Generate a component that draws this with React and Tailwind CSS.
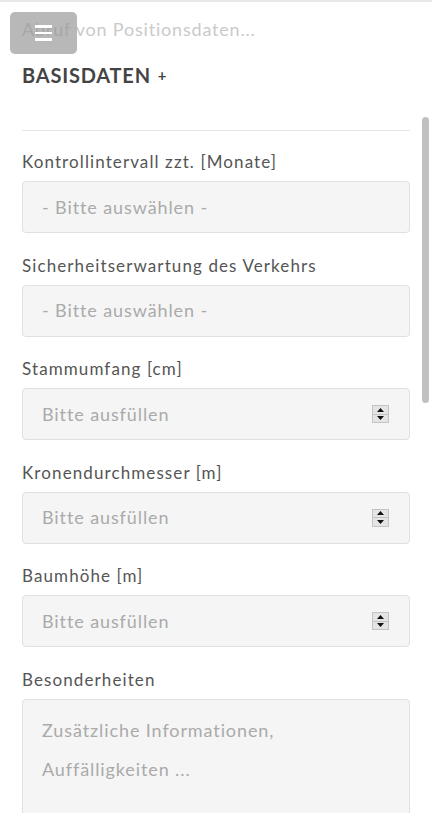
import React from "react";

function Label({ children }) {
  return (
    <div className="text-[17px] leading-[24px] text-[#555555] tracking-[1.1px]">{children}</div>
  );
}

function Spinner() {
  return (
    <div className="flex h-[18px] w-[17px] flex-col border border-[#c4c4c4] bg-[#e4e4e4]">
      <div className="flex flex-1 items-center justify-center border-b border-[#c4c4c4]">
        <svg width="7" height="4" viewBox="0 0 7 4"><path d="M0 4 L3.5 0 L7 4 Z" fill="#111" /></svg>
      </div>
      <div className="flex flex-1 items-center justify-center">
        <svg width="7" height="4" viewBox="0 0 7 4"><path d="M0 0 L3.5 4 L7 0 Z" fill="#111" /></svg>
      </div>
    </div>
  );
}

function Box({ children, spinner }) {
  return (
    <div className="mt-[7px] flex h-[52px] items-center justify-between rounded-[4px] border border-[#e0e0e0] bg-[#f5f5f5] pl-[19px] pr-[20px] text-[18px] tracking-[0.9px] text-[#aaaaaa]">
      <span>{children}</span>
      {spinner && <Spinner />}
    </div>
  );
}

function Field({ label, value, spinner, first }) {
  return (
    <div className={first ? "mt-[19px]" : "mt-[20.5px]"}>
      <Label>{label}</Label>
      <Box spinner={spinner}>{value}</Box>
    </div>
  );
}

export default function App() {
  return (
    <div
      className="relative h-[813px] w-[432px] overflow-hidden border-t-2 border-[#e8e8e8] bg-white"
      style={{ fontFamily: "Lato, 'Open Sans', sans-serif" }}
    >
      <div className="px-[22px]">
        <p className="pt-[16px] text-[18px] leading-[22px] tracking-[0.8px] text-[#cacaca]">Abruf von Positionsdaten...</p>
        <h2 className="mt-[23px] flex items-center gap-[7px] text-[20px] font-bold leading-[24px] tracking-[0.8px] text-[#444444]">
          BASISDATEN <span className="text-[15px] font-bold">+</span>
        </h2>
        <div className="mt-[43px] h-px bg-[#e4e4e4]" />
        <Field first label="Kontrollintervall zzt. [Monate]" value="- Bitte auswählen -" />
        <Field label="Sicherheitserwartung des Verkehrs" value="- Bitte auswählen -" />
        <Field label="Stammumfang [cm]" value="Bitte ausfüllen" spinner />
        <Field label="Kronendurchmesser [m]" value="Bitte ausfüllen" spinner />
        <Field label="Baumhöhe [m]" value="Bitte ausfüllen" spinner />
        <div className="mt-[20.5px]">
          <Label>Besonderheiten</Label>
          <div className="mt-[7px] h-[160px] rounded-[4px] border border-[#e0e0e0] bg-[#f5f5f5] px-[19px] pt-[11px] text-[18px] leading-[39px] tracking-[0.9px] text-[#aaaaaa]">
            Zusätzliche Informationen,
            <br />
            Auffälligkeiten ...
          </div>
        </div>
      </div>

      <button className="absolute left-[10px] top-[10px] flex h-[42px] w-[67px] flex-col items-center justify-center gap-[4px] rounded-[5px] bg-[rgba(150,150,150,0.68)]">
        <span className="block h-[2.5px] w-[17px] bg-white" />
        <span className="block h-[2.5px] w-[17px] bg-white" />
        <span className="block h-[2.5px] w-[17px] bg-white" />
      </button>

      <div className="absolute right-[3px] top-[115px] h-[286px] w-[7px] rounded-full bg-[#c1c1c1]" />
    </div>
  );
}
